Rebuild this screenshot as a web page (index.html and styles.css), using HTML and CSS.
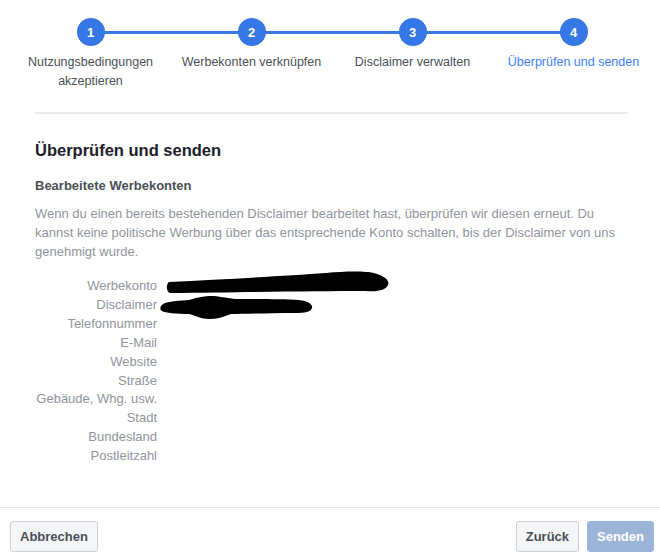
FILE: index.html
```html
<!DOCTYPE html>
<html lang="de">

<head>
    <meta charset="UTF-8">
    <title>Überprüfen und senden</title>
    <link rel="stylesheet" href="styles.css">
</head>

<body>

    <div class="dialog">
        <div class="steps">
            <div class="track"></div>
            <div class="step">
                <span class="dot">1</span>
                <span class="label">Nutzungsbedingungen<br>akzeptieren</span>
            </div>
            <div class="step">
                <span class="dot">2</span>
                <span class="label">Werbekonten verknüpfen</span>
            </div>
            <div class="step">
                <span class="dot">3</span>
                <span class="label">Disclaimer verwalten</span>
            </div>
            <div class="step current">
                <span class="dot">4</span>
                <span class="label">Überprüfen und senden</span>
            </div>
        </div>

        <div class="content">
            <h2>Überprüfen und senden</h2>
            <h3>Bearbeitete Werbekonten</h3>
            <p class="hint">Wenn du einen bereits bestehenden Disclaimer bearbeitet hast, überprüfen wir diesen erneut. Du kannst keine politische Werbung über das entsprechende Konto schalten, bis der Disclaimer von uns genehmigt wurde.</p>

            <div class="details">
                <span class="key">Werbekonto</span>
                <span class="value">
                    <svg class="redact" width="225" height="24" viewBox="0 0 225 24">
                        <path d="M3 11 C60 8 120 5 160 2 C180 0 200 0 208 2 C218 5 224 9 222 14 C220 19 212 21 200 20 C150 20 90 21 4 22 C0 21 0 13 3 11 Z" fill="#000" />
                    </svg>
                </span>
                <span class="key">Disclaimer</span>
                <span class="value">
                    <svg class="redact second" width="156" height="28" viewBox="0 0 156 28">
                        <path d="M2 13 C4 9 14 8 30 7 C40 4 46 3 52 3 C60 3 66 5 76 6 C100 6 125 6 140 7 C150 8 154 12 153 15 C152 19 146 20 136 20 C110 20 85 21 72 21 C64 24 58 26 50 26 C42 26 38 23 30 21 C18 21 6 20 3 18 C1 17 1 15 2 13 Z" fill="#000" />
                    </svg>
                </span>
                <span class="key">Telefonnummer</span>
                <span class="value"></span>
                <span class="key">E-Mail</span>
                <span class="value"></span>
                <span class="key">Website</span>
                <span class="value"></span>
                <span class="key">Straße</span>
                <span class="value"></span>
                <span class="key">Gebäude, Whg. usw.</span>
                <span class="value"></span>
                <span class="key">Stadt</span>
                <span class="value"></span>
                <span class="key">Bundesland</span>
                <span class="value"></span>
                <span class="key">Postleitzahl</span>
                <span class="value"></span>
            </div>
        </div>

        <div class="footer">
            <button class="btn">Abbrechen</button>
            <div class="right">
                <button class="btn">Zurück</button>
                <button class="btn primary" disabled>Senden</button>
            </div>
        </div>
    </div>

</body>

</html>
```

FILE: styles.css
```css
body {
    margin: 0;
    font-family: "Liberation Sans", Arial, sans-serif;
    background: #fff;
}

.dialog {
    width: 660px;
    height: 558px;
    display: flex;
    flex-direction: column;
}

.steps {
    position: relative;
    display: grid;
    grid-template-columns: repeat(4, 161px);
    padding: 18px 0 0 10px;
    height: 94px;
}

.track {
    position: absolute;
    left: 90px;
    width: 483px;
    top: 31px;
    height: 3px;
    background: #3578e5;
}

.step {
    position: relative;
    display: flex;
    flex-direction: column;
    align-items: center;
}

.dot {
    width: 28px;
    height: 28px;
    border-radius: 50%;
    background: #3578e5;
    color: #fff;
    font-size: 13px;
    font-weight: bold;
    display: flex;
    align-items: center;
    justify-content: center;
}

.label {
    margin-top: 7px;
    font-size: 12.5px;
    line-height: 19px;
    color: #4b4f56;
    text-align: center;
    white-space: nowrap;
}

.current .label {
    color: #4080ff;
}

.content {
    flex: 1;
    margin: 0 32px 0 35px;
    border-top: 2px solid #e9eaec;
}

h2 {
    margin: 25px 0 0;
    font-size: 16.5px;
    font-weight: bold;
    color: #1d2129;
    line-height: 22px;
}

h3 {
    margin: 17px 0 0;
    font-size: 13px;
    font-weight: bold;
    color: #4b4f56;
    line-height: 16px;
}

.hint {
    margin: 10px 0 0;
    font-size: 13px;
    line-height: 19px;
    color: #90949c;
}

.details {
    display: grid;
    grid-template-columns: 122px 1fr;
    column-gap: 8px;
    margin-top: 16px;
    font-size: 13px;
    line-height: 18.9px;
    color: #90949c;
}

.key {
    text-align: right;
}

.value {
    position: relative;
    height: 18.9px;
}

.redact {
    position: absolute;
    left: 1px;
    top: -6px;
}

.redact.second {
    left: -6px;
    top: -3px;
}

.footer {
    border-top: 1px solid #e5e6e9;
    padding: 13px 6px 6px 10px;
    display: flex;
    justify-content: space-between;
}

.right {
    display: flex;
    gap: 8px;
}

.btn {
    height: 31px;
    padding: 0 9px;
    font-family: "Liberation Sans", Arial, sans-serif;
    font-size: 13px;
    font-weight: bold;
    color: #4b4f56;
    background: #f5f6f7;
    border: 1px solid #ced0d4;
    border-radius: 3px;
}

.btn.primary {
    padding: 0 9px;
    color: #fff;
    background: #9cb4d8;
    border-color: #9cb4d8;
}
```
